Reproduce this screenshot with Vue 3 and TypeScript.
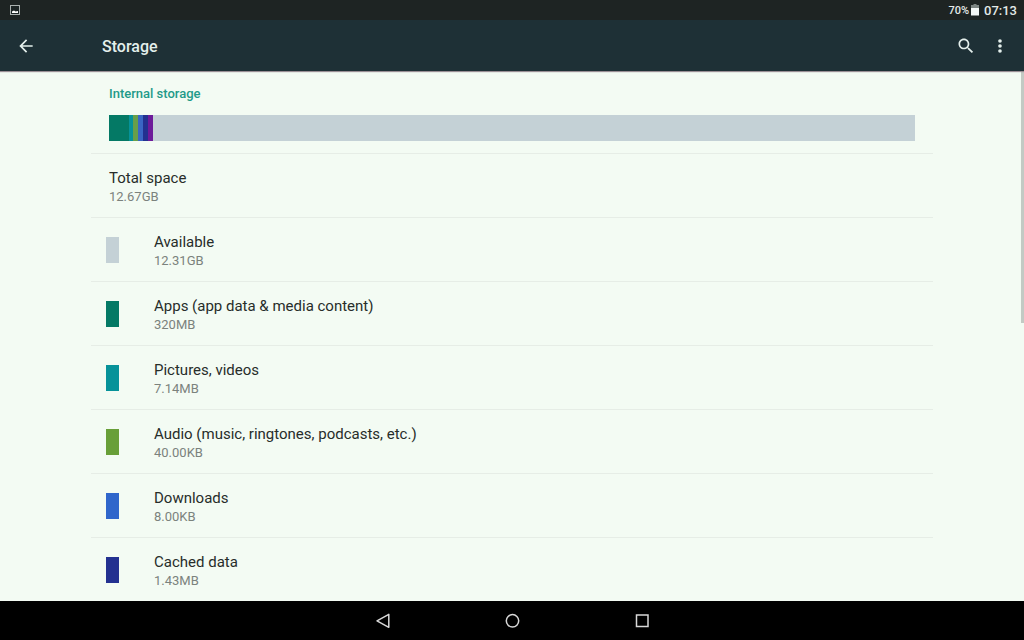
<script setup lang="ts">
interface StorageItem {
  name: string
  size: string
  color?: string
}

interface Segment {
  color: string
  width: number
}

const items: StorageItem[] = [
  { name: 'Total space', size: '12.67GB' },
  { name: 'Available', size: '12.31GB', color: '#c4d1d6' },
  { name: 'Apps (app data & media content)', size: '320MB', color: '#047965' },
  { name: 'Pictures, videos', size: '7.14MB', color: '#069299' },
  { name: 'Audio (music, ringtones, podcasts, etc.)', size: '40.00KB', color: '#689f38' },
  { name: 'Downloads', size: '8.00KB', color: '#2f66cb' },
  { name: 'Cached data', size: '1.43MB', color: '#233190' },
]

const segments: Segment[] = [
  { color: '#047965', width: 20 },
  { color: '#069299', width: 4 },
  { color: '#689f4a', width: 5 },
  { color: '#3a66c4', width: 5 },
  { color: '#233190', width: 5 },
  { color: '#6d1b9a', width: 5 },
]
</script>

<template>
  <div class="screen">
    <div class="status">
      <svg class="picture" width="12" height="12" viewBox="0 0 12 12" aria-hidden="true">
        <rect x="1.500" y="1.500" width="9" height="9" fill="#1c2424" stroke="#a9b0ae" />
        <path d="M3 9V7.500l2-1 1.500 1 2.500-.5v2z" fill="#fff" />
      </svg>
      <div class="indicators">
        <span class="percent">70%</span>
        <svg width="8" height="12" viewBox="0 0 8 12" aria-hidden="true">
          <path d="M2.500 0h3v1H8v3H0V1h2.500z" fill="#7c8482" />
          <path d="M0 4h8v7.500H0z" fill="#f4f7f6" />
        </svg>
        <span class="clock">07:13</span>
      </div>
    </div>

    <header class="toolbar">
      <button class="icon-button" type="button" aria-label="Back">
        <svg width="20" height="20" viewBox="0 0 24 24" aria-hidden="true">
          <path d="M20 11H7.830l5.590-5.590L12 4l-8 8 8 8 1.410-1.410L7.830 13H20v-2z" fill="#e4efec" />
        </svg>
      </button>
      <h1 class="title">Storage</h1>
      <button class="icon-button" type="button" aria-label="Search">
        <svg width="20" height="20" viewBox="0 0 24 24" aria-hidden="true">
          <path
            d="M15.500 14h-.79l-.28-.27C15.410 12.590 16 11.110 16 9.500 16 5.910 13.090 3 9.500 3S3 5.910 3 9.500 5.910 16 9.500 16c1.610 0 3.090-.59 4.230-1.570l.27.28v.79l5 4.990L20.490 19l-4.990-5zm-6 0C7.010 14 5 11.990 5 9.500S7.010 5 9.500 5 14 7.010 14 9.500 11.990 14 9.500 14z"
            fill="#e4efec"
          />
        </svg>
      </button>
      <button class="icon-button" type="button" aria-label="More options">
        <svg width="20" height="20" viewBox="0 0 24 24" aria-hidden="true">
          <g fill="#e4efec">
            <circle cx="12" cy="6" r="2.200" />
            <circle cx="12" cy="12" r="2.200" />
            <circle cx="12" cy="18" r="2.200" />
          </g>
        </svg>
      </button>
    </header>

    <main class="content">
      <section class="usage">
        <h2 class="heading">Internal storage</h2>
        <div class="bar">
          <span
            v-for="segment in segments"
            :key="segment.color"
            class="segment"
            :style="{ width: segment.width + 'px', background: segment.color }"
          ></span>
        </div>
      </section>
      <ul class="list">
        <li v-for="item in items" :key="item.name" class="row">
          <span v-if="item.color" class="swatch" :style="{ background: item.color }"></span>
          <div class="label" :class="{ plain: !item.color }">
            <span class="name">{{ item.name }}</span>
            <span class="size">{{ item.size }}</span>
          </div>
        </li>
      </ul>
      <div class="scroll-thumb"></div>
    </main>

    <nav class="navbar">
      <button class="nav-button" type="button" aria-label="Back">
        <svg width="18" height="18" viewBox="0 0 18 18" aria-hidden="true">
          <path d="M4 8.800L15.800 2.300v13z" fill="none" stroke="#d8d8d8" stroke-width="1.500" stroke-linejoin="round" />
        </svg>
      </button>
      <button class="nav-button" type="button" aria-label="Home">
        <svg width="18" height="18" viewBox="0 0 18 18" aria-hidden="true">
          <circle cx="9.500" cy="8.800" r="6.200" fill="none" stroke="#d8d8d8" stroke-width="1.500" />
        </svg>
      </button>
      <button class="nav-button" type="button" aria-label="Recent apps">
        <svg width="18" height="18" viewBox="0 0 18 18" aria-hidden="true">
          <rect x="3.500" y="3" width="11.500" height="11.500" fill="none" stroke="#d8d8d8" stroke-width="1.500" />
        </svg>
      </button>
    </nav>
  </div>
</template>

<style>
body {
  margin: 0;
}
</style>

<style scoped>
.screen {
  display: flex;
  flex-direction: column;
  height: 100vh;
  overflow: hidden;
  background: #f3fbf3;
  color: #272d2a;
  font-family: Roboto, "Liberation Sans", sans-serif;
}

.status {
  display: flex;
  flex: none;
  align-items: center;
  justify-content: space-between;
  height: 20px;
  padding: 0 7px 0 9px;
  background: #1e2423;
  color: #e4eae8;
}

.indicators {
  display: flex;
  align-items: center;
}

.percent {
  margin-right: 2px;
  font-size: 11px;
  font-weight: 500;
}

.clock {
  margin-left: 5px;
  font-size: 13px;
  font-weight: 500;
}

.toolbar {
  display: flex;
  flex: none;
  align-items: center;
  height: 51px;
  padding: 0 7px 0 9px;
  background: #1e3036;
  box-shadow: 0 1px 1px #9a8f95;
  z-index: 1;
}

.icon-button,
.nav-button {
  display: flex;
  align-items: center;
  justify-content: center;
  padding: 0;
  border: 0;
  background: none;
}

.icon-button {
  width: 34px;
  height: 40px;
}

.title {
  flex: 1;
  margin: 0 0 0 59px;
  color: #e4efec;
  font-size: 16px;
  font-weight: 500;
  line-height: 20px;
  padding-top: 2px;
}

.content {
  position: relative;
  flex: 1;
  min-height: 0;
  overflow: hidden;
  padding: 0 91px;
}

.usage {
  padding: 14px 18px 12px;
}

.heading {
  margin: 0 0 12px;
  color: #1f9a89;
  font-size: 13px;
  font-weight: 500;
  line-height: 18px;
}

.bar {
  display: flex;
  height: 26px;
  background: #c4d1d6;
}

.list {
  margin: 0;
  padding: 0;
  list-style: none;
}

.row {
  display: flex;
  align-items: center;
  box-sizing: border-box;
  height: 64px;
  padding-left: 15px;
  border-top: 1px solid #e6ede6;
}

.swatch {
  width: 13px;
  height: 26px;
}

.label {
  display: flex;
  flex-direction: column;
  margin-left: 35px;
  padding-top: 2px;
}

.plain {
  margin-left: 3px;
}

.name {
  font-size: 15px;
  line-height: 20px;
}

.size {
  color: #7b827d;
  font-size: 13px;
  line-height: 18px;
}

.scroll-thumb {
  position: absolute;
  top: 0;
  right: 0;
  width: 3px;
  height: 47.5%;
  background: #c3cac4;
}

.navbar {
  display: flex;
  flex: none;
  align-items: center;
  justify-content: center;
  gap: 90px;
  height: 39px;
  background: #000;
}

.nav-button {
  width: 40px;
  height: 38px;
}
</style>
